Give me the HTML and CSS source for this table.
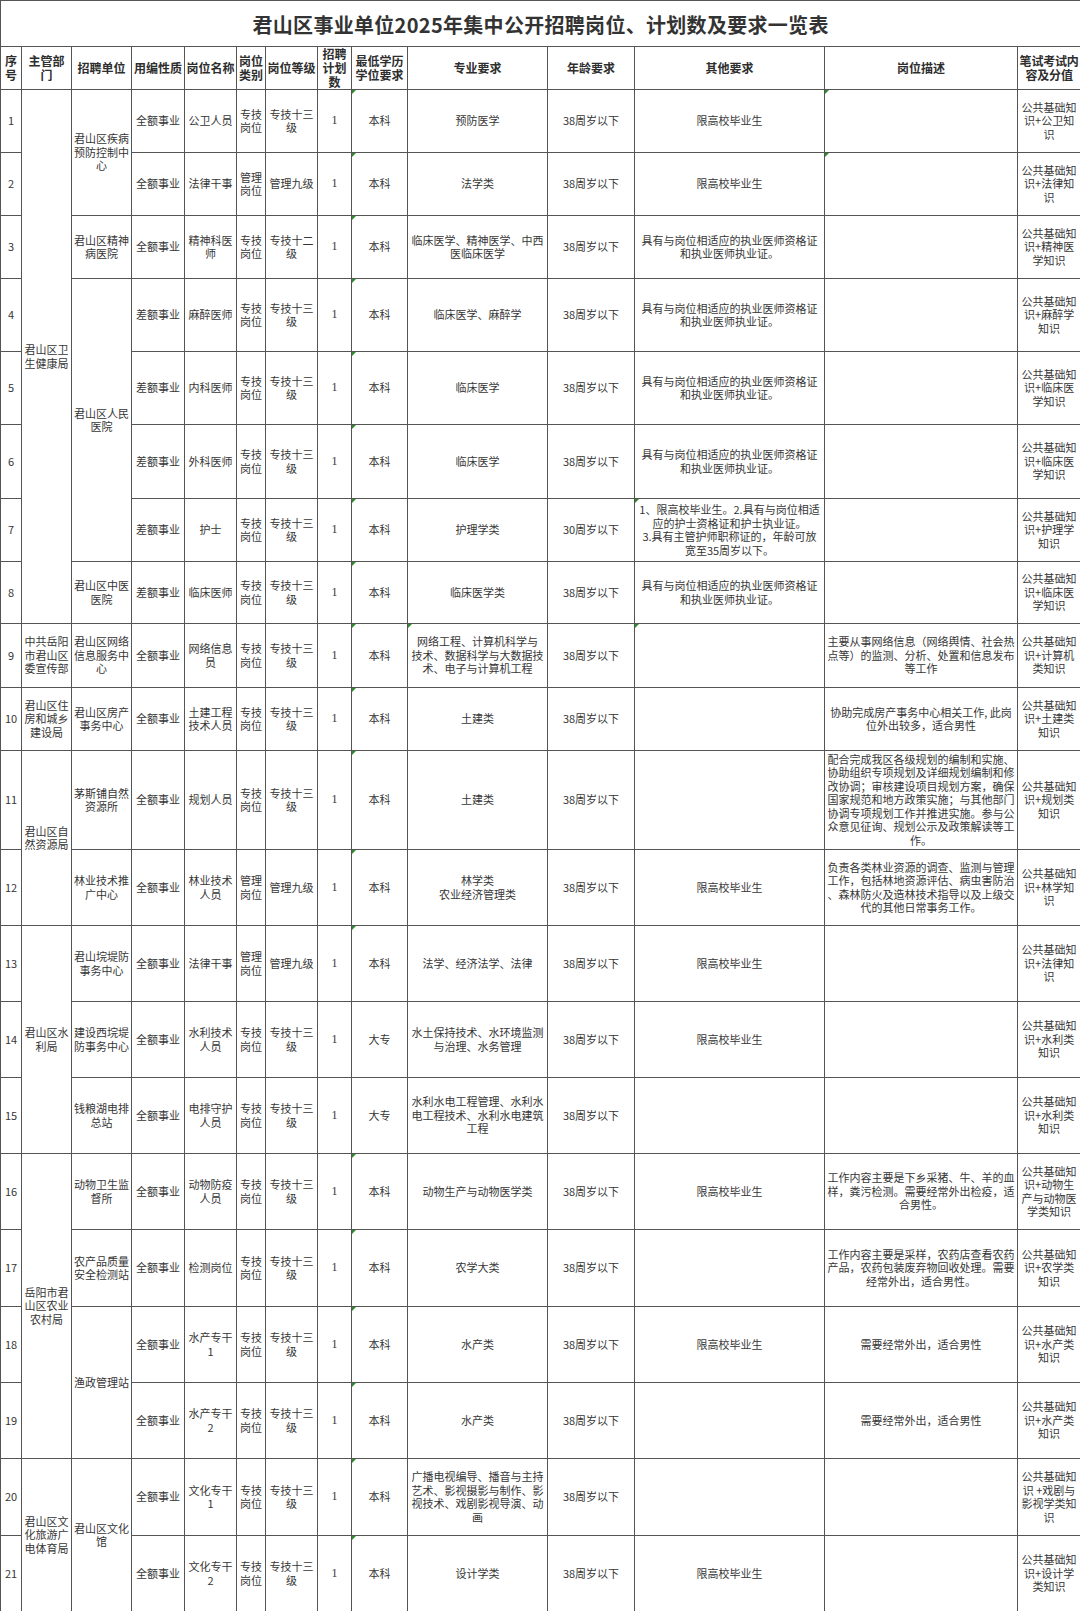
FILE: index.html
```html
<!DOCTYPE html>
<html lang="zh-CN">
<head>
<meta charset="utf-8">
<title>君山区事业单位2025年集中公开招聘岗位、计划数及要求一览表</title>
<link rel="stylesheet" href="styles.css">
</head>
<body>
<table class="sheet">
<colgroup>
<col class="c-no"><col class="c-dept"><col class="c-unit"><col class="c-type"><col class="c-name"><col class="c-cat"><col class="c-lvl"><col class="c-num"><col class="c-edu"><col class="c-major"><col class="c-age"><col class="c-other"><col class="c-desc"><col class="c-exam">
</colgroup>
<thead>
<tr class="h-title"><th class="title" colspan="14">君山区事业单位2025年集中公开招聘岗位、计划数及要求一览表</th></tr>
<tr class="h-head">
<th>序<br>号</th><th>主管部<br>门</th><th>招聘单位</th><th>用编性质</th><th>岗位名称</th><th>岗位<br>类别</th><th>岗位等级</th><th>招聘<br>计划<br>数</th><th>最低学历<br>学位要求</th><th>专业要求</th><th>年龄要求</th><th>其他要求</th><th>岗位描述</th><th class="tight">笔试考试内<br>容及分值</th>
</tr>
</thead>
<tbody>
<tr class="h63">
<td>1</td>
<td rowspan="8">君山区卫<br>生健康局</td>
<td rowspan="2">君山区疾病<br>预防控制中<br>心</td>
<td>全额事业</td><td>公卫人员</td><td>专技<br>岗位</td><td>专技十三<br>级</td><td class="num">1</td><td class="mk">本科</td><td>预防医学</td><td>38周岁以下</td><td>限高校毕业生</td><td class="mk"></td><td>公共基础知<br>识+公卫知<br>识</td>
</tr>
<tr class="h63">
<td>2</td>
<td>全额事业</td><td>法律干事</td><td>管理<br>岗位</td><td>管理九级</td><td class="num">1</td><td class="mk">本科</td><td>法学类</td><td>38周岁以下</td><td>限高校毕业生</td><td class="mk"></td><td>公共基础知<br>识+法律知<br>识</td>
</tr>
<tr class="h63">
<td>3</td>
<td>君山区精神<br>病医院</td>
<td>全额事业</td><td>精神科医<br>师</td><td>专技<br>岗位</td><td>专技十二<br>级</td><td class="num">1</td><td class="mk">本科</td><td>临床医学、精神医学、中西<br>医临床医学</td><td>38周岁以下</td><td>具有与岗位相适应的执业医师资格证<br>和执业医师执业证。</td><td></td><td>公共基础知<br>识+精神医<br>学知识</td>
</tr>
<tr class="h73">
<td>4</td>
<td rowspan="4">君山区人民<br>医院</td>
<td>差额事业</td><td>麻醉医师</td><td>专技<br>岗位</td><td>专技十三<br>级</td><td class="num">1</td><td class="mk">本科</td><td>临床医学、麻醉学</td><td>38周岁以下</td><td>具有与岗位相适应的执业医师资格证<br>和执业医师执业证。</td><td></td><td>公共基础知<br>识+麻醉学<br>知识</td>
</tr>
<tr class="h73">
<td>5</td>
<td>差额事业</td><td>内科医师</td><td>专技<br>岗位</td><td>专技十三<br>级</td><td class="num">1</td><td class="mk">本科</td><td>临床医学</td><td>38周岁以下</td><td>具有与岗位相适应的执业医师资格证<br>和执业医师执业证。</td><td></td><td>公共基础知<br>识+临床医<br>学知识</td>
</tr>
<tr class="h74">
<td>6</td>
<td>差额事业</td><td>外科医师</td><td>专技<br>岗位</td><td>专技十三<br>级</td><td class="num">1</td><td class="mk">本科</td><td>临床医学</td><td>38周岁以下</td><td>具有与岗位相适应的执业医师资格证<br>和执业医师执业证。</td><td></td><td>公共基础知<br>识+临床医<br>学知识</td>
</tr>
<tr class="h63">
<td>7</td>
<td>差额事业</td><td>护士</td><td>专技<br>岗位</td><td>专技十三<br>级</td><td class="num">1</td><td class="mk">本科</td><td>护理学类</td><td>30周岁以下</td><td class="mk">1、限高校毕业生。2.具有与岗位相适<br>应的护士资格证和护士执业证。<br>3.具有主管护师职称证的，年龄可放<br>宽至35周岁以下。</td><td></td><td>公共基础知<br>识+护理学<br>知识</td>
</tr>
<tr class="h62">
<td>8</td>
<td>君山区中医<br>医院</td>
<td>差额事业</td><td>临床医师</td><td>专技<br>岗位</td><td>专技十三<br>级</td><td class="num">1</td><td class="mk">本科</td><td>临床医学类</td><td>38周岁以下</td><td>具有与岗位相适应的执业医师资格证<br>和执业医师执业证。</td><td></td><td>公共基础知<br>识+临床医<br>学知识</td>
</tr>
<tr class="h64">
<td>9</td>
<td>中共岳阳<br>市君山区<br>委宣传部</td>
<td>君山区网络<br>信息服务中<br>心</td>
<td>全额事业</td><td>网络信息<br>员</td><td>专技<br>岗位</td><td>专技十三<br>级</td><td class="num">1</td><td class="mk">本科</td><td class="mk">网络工程、计算机科学与<br>技术、数据科学与大数据技<br>术、电子与计算机工程</td><td>38周岁以下</td><td class="mk"></td><td>主要从事网络信息（网络舆情、社会热<br>点等）的监测、分析、处置和信息发布<br>等工作</td><td>公共基础知<br>识+计算机<br>类知识</td>
</tr>
<tr class="h63">
<td>10</td>
<td>君山区住<br>房和城乡<br>建设局</td>
<td>君山区房产<br>事务中心</td>
<td>全额事业</td><td>土建工程<br>技术人员</td><td>专技<br>岗位</td><td>专技十三<br>级</td><td class="num">1</td><td class="mk">本科</td><td>土建类</td><td>38周岁以下</td><td></td><td>协助完成房产事务中心相关工作, 此岗<br>位外出较多，适合男性</td><td>公共基础知<br>识+土建类<br>知识</td>
</tr>
<tr class="h99">
<td>11</td>
<td rowspan="2">君山区自<br>然资源局</td>
<td>茅斯铺自然<br>资源所</td>
<td>全额事业</td><td>规划人员</td><td>专技<br>岗位</td><td>专技十三<br>级</td><td class="num">1</td><td class="mk">本科</td><td>土建类</td><td>38周岁以下</td><td></td><td>配合完成我区各级规划的编制和实施、<br>协助组织专项规划及详细规划编制和修<br>改协调；审核建设项目规划方案，确保<br>国家规范和地方政策实施；与其他部门<br>协调专项规划工作并推进实施。参与公<br>众意见征询、规划公示及政策解读等工<br>作。</td><td>公共基础知<br>识+规划类<br>知识</td>
</tr>
<tr class="h76">
<td>12</td>
<td>林业技术推<br>广中心</td>
<td>全额事业</td><td>林业技术<br>人员</td><td>管理<br>岗位</td><td>管理九级</td><td class="num">1</td><td class="mk">本科</td><td>林学类<br>农业经济管理类</td><td>38周岁以下</td><td>限高校毕业生</td><td>负责各类林业资源的调查、监测与管理<br>工作，包括林地资源评估、病虫害防治<br>、森林防火及造林技术指导以及上级交<br>代的其他日常事务工作。</td><td>公共基础知<br>识+林学知<br>识</td>
</tr>
<tr class="h76">
<td>13</td>
<td rowspan="3">君山区水<br>利局</td>
<td>君山垸堤防<br>事务中心</td>
<td>全额事业</td><td>法律干事</td><td>管理<br>岗位</td><td>管理九级</td><td class="num">1</td><td class="mk">本科</td><td>法学、经济法学、法律</td><td>38周岁以下</td><td>限高校毕业生</td><td></td><td>公共基础知<br>识+法律知<br>识</td>
</tr>
<tr class="h76">
<td>14</td>
<td>建设西垸堤<br>防事务中心</td>
<td>全额事业</td><td>水利技术<br>人员</td><td>专技<br>岗位</td><td>专技十三<br>级</td><td class="num">1</td><td>大专</td><td>水土保持技术、水环境监测<br>与治理、水务管理</td><td>38周岁以下</td><td>限高校毕业生</td><td></td><td>公共基础知<br>识+水利类<br>知识</td>
</tr>
<tr class="h76">
<td>15</td>
<td>钱粮湖电排<br>总站</td>
<td>全额事业</td><td>电排守护<br>人员</td><td>专技<br>岗位</td><td>专技十三<br>级</td><td class="num">1</td><td>大专</td><td>水利水电工程管理、水利水<br>电工程技术、水利水电建筑<br>工程</td><td>38周岁以下</td><td></td><td></td><td>公共基础知<br>识+水利类<br>知识</td>
</tr>
<tr class="h76">
<td>16</td>
<td rowspan="4">岳阳市君<br>山区农业<br>农村局</td>
<td>动物卫生监<br>督所</td>
<td>全额事业</td><td>动物防疫<br>人员</td><td>专技<br>岗位</td><td>专技十三<br>级</td><td class="num">1</td><td class="mk">本科</td><td>动物生产与动物医学类</td><td>38周岁以下</td><td>限高校毕业生</td><td>工作内容主要是下乡采猪、牛、羊的血<br>样，粪污检测。需要经常外出检疫，适<br>合男性。</td><td>公共基础知<br>识+动物生<br>产与动物医<br>学类知识</td>
</tr>
<tr class="h77">
<td>17</td>
<td>农产品质量<br>安全检测站</td>
<td>全额事业</td><td>检测岗位</td><td>专技<br>岗位</td><td>专技十三<br>级</td><td class="num">1</td><td class="mk">本科</td><td>农学大类</td><td>38周岁以下</td><td></td><td>工作内容主要是采样，农药店查看农药<br>产品，农药包装废弃物回收处理。需要<br>经常外出，适合男性。</td><td>公共基础知<br>识+农学类<br>知识</td>
</tr>
<tr class="h76">
<td>18</td>
<td rowspan="2">渔政管理站</td>
<td>全额事业</td><td>水产专干<br>1</td><td>专技<br>岗位</td><td>专技十三<br>级</td><td class="num">1</td><td class="mk">本科</td><td>水产类</td><td>38周岁以下</td><td>限高校毕业生</td><td>需要经常外出，适合男性</td><td>公共基础知<br>识+水产类<br>知识</td>
</tr>
<tr class="h76">
<td>19</td>
<td>全额事业</td><td>水产专干<br>2</td><td>专技<br>岗位</td><td>专技十三<br>级</td><td class="num">1</td><td class="mk">本科</td><td>水产类</td><td>38周岁以下</td><td></td><td>需要经常外出，适合男性</td><td>公共基础知<br>识+水产类<br>知识</td>
</tr>
<tr class="h77">
<td>20</td>
<td rowspan="2">君山区文<br>化旅游广<br>电体育局</td>
<td rowspan="2">君山区文化<br>馆</td>
<td>全额事业</td><td>文化专干<br>1</td><td>专技<br>岗位</td><td>专技十三<br>级</td><td class="num">1</td><td class="mk">本科</td><td>广播电视编导、播音与主持<br>艺术、影视摄影与制作、影<br>视技术、戏剧影视导演、动<br>画</td><td>38周岁以下</td><td></td><td></td><td>公共基础知<br>识 +戏剧与<br>影视学类知<br>识</td>
</tr>
<tr class="h76">
<td>21</td>
<td>全额事业</td><td>文化专干<br>2</td><td>专技<br>岗位</td><td>专技十三<br>级</td><td class="num">1</td><td class="mk">本科</td><td>设计学类</td><td>38周岁以下</td><td>限高校毕业生</td><td></td><td>公共基础知<br>识+设计学<br>类知识</td>
</tr>
</tbody>
</table>
</body>
</html>
```
FILE: styles.css
```css
html, body {
  margin: 0;
  padding: 0;
  background: #ffffff;
}

body {
  font-family: "Noto Sans CJK SC", "Liberation Sans", sans-serif;
  color: #363636;
}

.sheet {
  width: 1080px;
  border-collapse: collapse;
  table-layout: fixed;
}

.c-no { width: 21px; }
.c-dept { width: 50px; }
.c-unit { width: 60px; }
.c-type { width: 53px; }
.c-name { width: 52px; }
.c-cat { width: 29px; }
.c-lvl { width: 52px; }
.c-num { width: 34px; }
.c-edu { width: 56px; }
.c-major { width: 140px; }
.c-age { width: 87px; }
.c-other { width: 190px; }
.c-desc { width: 193px; }
.c-exam { width: 63px; }

.sheet th,
.sheet td {
  border: 1px solid #555555;
  padding: 0 2px;
  text-align: center;
  vertical-align: middle;
  font-size: 11px;
  line-height: 13.5px;
  font-weight: 400;
  word-break: break-all;
  line-break: anywhere;
  position: relative;
}

.sheet th {
  font-size: 12px;
  line-height: 14px;
  font-weight: 700;
  color: #2e2e2e;
  padding: 0 1px;
}

.sheet th.tight {
  padding: 0;
  white-space: nowrap;
  letter-spacing: -0.2px;
}

.h-title { height: 46px; }
.h-head { height: 42px; }

.sheet th.title {
  font-size: 20px;
  line-height: 24px;
  font-weight: 700;
  color: #333333;
  letter-spacing: 0.3px;
  padding-top: 2px;
}

.sheet td.num {
  font-family: "Liberation Serif", serif;
  font-size: 12px;
}

.h62 { height: 62px; }
.h63 { height: 63px; }
.h64 { height: 64px; }
.h73 { height: 73px; }
.h74 { height: 74px; }
.h76 { height: 76px; }
.h77 { height: 77px; }
.h99 { height: 99px; }

.mk::before {
  content: "";
  position: absolute;
  left: 0;
  top: 0;
  width: 0;
  height: 0;
  border-top: 4px solid #2f8a2f;
  border-right: 4px solid transparent;
}
```
